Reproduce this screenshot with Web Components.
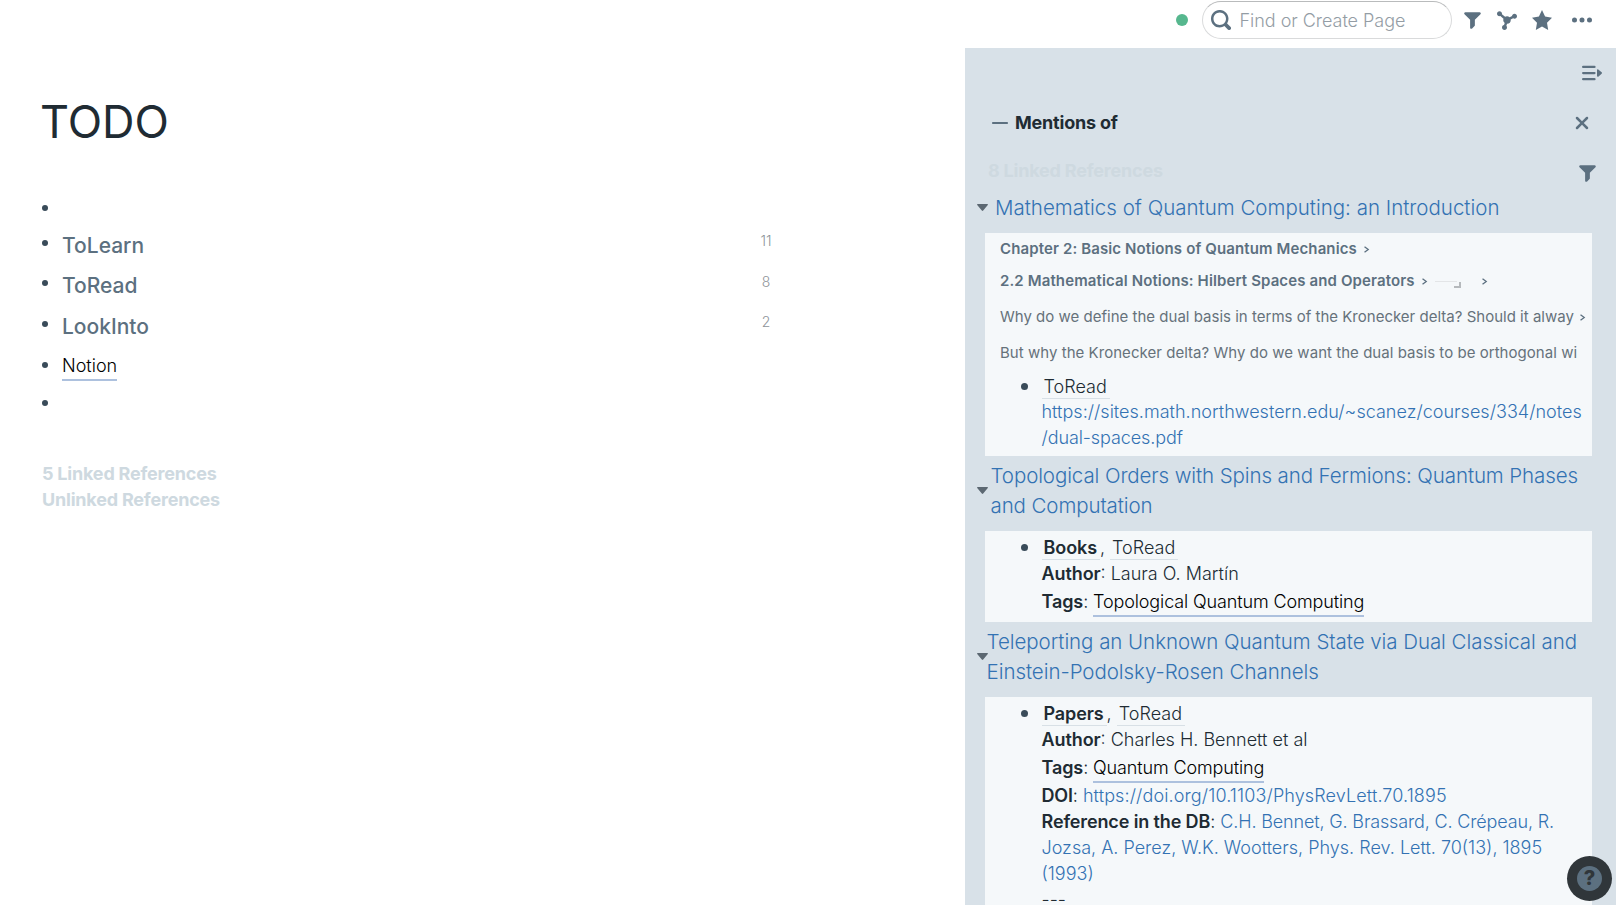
<!DOCTYPE html>
<html lang="en">
<head>
<meta charset="utf-8">
<title>TODO</title>
<style>
html,body{margin:0;height:100%;overflow:hidden;background:#fff}
body{font-family:Inter,"Liberation Sans",sans-serif;font-size:18px;line-height:26px;font-weight:300;color:#202b33}
</style>
</head>
<body>
<roam-app></roam-app>
<script>
const define = (name, html) => customElements.define(name, class extends HTMLElement {
  constructor() {
    super();
    const t = document.createElement('template');
    t.innerHTML = typeof html === 'function' ? html(this) : html;
    this.attachShadow({ mode: 'open' }).appendChild(t.content.cloneNode(true));
  }
});

const ICONS = {
  search: '<path d="M15.55 13.43l-2.67-2.68a6.94 6.94 0 001.11-3.76c0-3.87-3.13-7-7-7s-7 3.13-7 7 3.13 7 7 7c1.39 0 2.68-.42 3.76-1.11l2.68 2.67a1.498 1.498 0 102.12-2.12zm-8.56-1.44c-2.76 0-5-2.24-5-5s2.24-5 5-5 5 2.24 5 5-2.24 5-5 5z"/>',
  filter: '<path d="M13.99.99h-12a1.003 1.003 0 00-.71 1.71l4.71 4.71V14a1.003 1.003 0 001.71.71l2-2c.18-.18.29-.43.29-.71V7.41L14.7 2.7a1.003 1.003 0 00-.71-1.71z"/>',
  graph: '<path d="M14 3c-1.06 0-1.92.83-1.99 1.88l-1.93.97A2.95 2.95 0 008 5c-.56 0-1.08.16-1.52.43L3.97 3.34C3.98 3.23 4 3.12 4 3c0-1.1-.9-2-2-2s-2 .9-2 2 .9 2 2 2c.24 0 .47-.05.68-.13l2.51 2.09C5.08 7.29 5 7.63 5 8c0 .96.46 1.81 1.16 2.35l-.56 1.69c-.91.19-1.6.99-1.6 1.96 0 1.1.9 2 2 2s2-.9 2-2c0-.51-.2-.97-.51-1.32l.56-1.69A2.99 2.99 0 0011 8c0-.12-.02-.24-.04-.36l1.94-.97c.32.2.69.33 1.1.33 1.1 0 2-.9 2-2s-.9-2-2-2z"/>',
  star: '<path d="M16 6.11l-5.53-.84L8 0 5.53 5.27 0 6.11l4 4.1L3.06 16 8 13.27 12.94 16 12 10.21z"/>',
  more: '<path d="M2 6.03a2 2 0 100 4 2 2 0 100-4zM14 6.03a2 2 0 100 4 2 2 0 100-4zM8 6.03a2 2 0 100 4 2 2 0 100-4z"/>',
  cross: '<path d="M9.41 8l3.29-3.29c.19-.18.3-.43.3-.71a1.003 1.003 0 00-1.71-.71L8 6.59l-3.29-3.3a1.003 1.003 0 00-1.42 1.42L6.59 8 3.3 11.29c-.19.18-.3.43-.3.71a1.003 1.003 0 001.71.71L8 9.41l3.29 3.29c.18.19.43.3.71.3a1.003 1.003 0 00.71-1.71L9.41 8z"/>',
  collapse: '<path d="M.9 3.1H10M.9 8H10M.9 12.9H10" stroke="currentColor" stroke-width="1.8" stroke-linecap="round"/><path d="M12 5.6c0-.6.6-.8 1-.5l2.7 2.3c.4.3.4.8 0 1.1L13 10.9c-.4.3-1 .1-1-.5z"/>',
  minus: '<path d="M.8 8h14.4" stroke="currentColor" stroke-width="1.9" stroke-linecap="round"/>',
  chevron: '<path d="M3.5 1.5L12 8l-8.500 6.500" fill="none" stroke="currentColor" stroke-width="3"/>',
  caret: '<path d="M1 3h14c.8 0 1.200.8.7 1.400L9 12.500c-.6.700-1.400.700-2 0L.3 4.400C-.2 3.800.2 3 1 3z"/>'
};
define('ui-icon', el => `<style>:host{display:block;flex:none;color:#5c7080;width:20px;height:20px}svg{display:block;width:100%;height:100%;fill:currentColor}</style>
<svg viewBox="0 0 16 16">${ICONS[el.getAttribute('name')]}</svg>`);

define('top-bar', `<style>
:host{display:flex;height:48px;box-sizing:border-box;padding-left:1176px;align-items:flex-start}
.dot{width:12px;height:12px;border-radius:50%;background:#56b78e;margin:14px 14px 0 0}
.search{box-sizing:border-box;width:250px;height:38px;margin-top:1px;border-radius:19px;border:1px solid #d9dadb;border-top-color:#b9bbbc;display:flex;align-items:center;padding-left:8px;gap:8.500px;color:#949da5;letter-spacing:-.03px}
.search span{padding-top:1px}
.search ui-icon{margin-top:-1px}
ui-icon{margin-top:10px}
</style>
<span class="dot"></span>
<div class="search"><ui-icon name="search"></ui-icon><span>Find or Create Page</span></div>
<ui-icon name="filter" style="width:19px;height:19px;margin-left:10.500px;margin-top:11px"></ui-icon>
<ui-icon name="graph" style="margin-left:15.500px"></ui-icon>
<ui-icon name="star" style="margin-left:15px"></ui-icon>
<ui-icon name="more" style="margin-left:20px"></ui-icon>`);

define('page-ref', `<style>:host{display:inline;color:#000;border-bottom:2px solid #adc1de;padding-bottom:3px}</style><slot></slot>`);
define('page-tag', `<style>:host{display:inline;border-bottom:1px solid #d8e0e6;padding:0 3px 1px 2px}</style><slot></slot>`);
define('ext-link', `<style>:host{display:inline;color:#3372b3}</style><slot></slot>`);

define('outline-row', `<style>
:host{display:flex;align-items:flex-start;height:40.400px}
.bullet{flex:none;width:6px;height:6px;border-radius:50%;background:#394b59;margin:11px 14px 0 42px}
.text{padding-top:2px;width:671px}
:host([heading]) .text{font-size:21px;line-height:30px;font-weight:450;color:#5c7080}
.count{font-size:14px;line-height:24px;width:66px;text-align:center;color:#8e9499}
</style><span class="bullet"></span><div class="text"><slot></slot></div><div class="count"><slot name="count"></slot></div>`);

define('article-view', `<style>
:host{display:block;width:965px}
h1{margin:0;padding:46px 0 44px 40px;font-size:45px;line-height:56px;font-weight:400;color:#202b33}
.refs{padding:33.800px 0 0 42px;font-weight:650;letter-spacing:-.2px;color:#ced9e0}
</style>
<h1>TODO</h1>
<outline-row style="height:35px"></outline-row>
<outline-row heading>ToLearn<span slot="count">11</span></outline-row>
<outline-row heading>ToRead<span slot="count" style="position:relative;top:1px">8</span></outline-row>
<outline-row heading style="height:40.900px">LookInto<span slot="count">2</span></outline-row>
<outline-row style="height:38.500px"><page-ref>Notion</page-ref></outline-row>
<outline-row style="height:38px"></outline-row>
<div class="refs"><div>5 Linked References</div><div>Unlinked References</div></div>`);

define('crumb-line', `<style>
:host{display:flex;align-items:center;height:32px;padding-left:15px;font-size:15px;font-weight:600;letter-spacing:.12px;color:#5c7080;white-space:nowrap}
:host([thin]){height:36px;font-weight:400;letter-spacing:.04px;color:#66727b}
</style><slot></slot>`);

define('ref-group', `<style>
:host{display:block;padding-left:12px}
.title{display:flex;align-items:center;padding:4px 0 11px;font-size:20.500px;line-height:30px;color:#3372b3}
.title ui-icon{width:11px;height:11px;color:#5c6872;margin-top:1px}
.card{margin:0 24px 0 8px;background:#f5f8fa;overflow:hidden}
.block{display:flex;padding:3.500px 0 5.500px}
.bullet{flex:none;width:7px;height:7px;border-radius:50%;background:#394b59;margin:var(--dot-top,9.500px) 13.500px 0 36px}
.body{flex:1;white-space:nowrap}
.name{margin:1px 0 -1px var(--indent,8px);white-space:nowrap}
</style>
<div class="title"><ui-icon name="caret"></ui-icon><div class="name"><slot name="title"></slot></div></div>
<div class="card"><slot name="crumbs"></slot><div class="block"><span class="bullet"></span><div class="body"><slot></slot></div></div></div>`);

define('side-panel', `<style>
:host{display:block;width:651px;height:857px;background:#d8e1e8;overflow:hidden}
b{font-weight:600;letter-spacing:-.1px}
.tools{display:flex;justify-content:flex-end;padding:14.500px 14px 0 0;height:46.500px;box-sizing:border-box}
.head{display:flex;align-items:center;height:56px;padding:0 24px 0 27px;font-weight:650;letter-spacing:-.2px}
.head ui-icon:first-child{width:16px;height:16px;margin-right:7px}
.head span{flex:1}
.sub{display:flex;justify-content:space-between;height:37.500px;padding:7px 19px 0 23px;box-sizing:border-box;font-weight:650;letter-spacing:-.2px;color:#ced9e0}
.tags{line-height:30px;letter-spacing:-.13px}
.stub{display:block;position:relative;width:27px;height:14px;margin:0 19px 0 7px}
.stub i{position:absolute;left:0;top:7px;width:22px;height:1px;background:#e3e5e7}
.stub u{position:absolute;left:19px;top:8px;width:5px;height:4px;border:solid #b5b9bc;border-width:0 2px 2px 0}
crumb-line ui-icon{width:7px;height:7px}
</style>
<div class="tools"><ui-icon name="collapse"></ui-icon></div>
<div class="head"><ui-icon name="minus"></ui-icon><span>Mentions of</span><ui-icon name="cross"></ui-icon></div>
<div class="sub"><span>8 Linked References</span><ui-icon name="filter" style="width:19px;height:19px;margin-top:6px"></ui-icon></div>
<ref-group style="--indent:7px;--dot-top:8px">
  <div slot="title">Mathematics of Quantum Computing: an Introduction</div>
  <crumb-line slot="crumbs"><span>Chapter 2: Basic Notions of Quantum Mechanics</span><ui-icon name="chevron" style="margin-left:6.500px"></ui-icon></crumb-line>
  <crumb-line slot="crumbs"><span>2.2 Mathematical Notions: Hilbert Spaces and Operators</span><ui-icon name="chevron" style="margin-left:6.500px"></ui-icon><span class="stub"><i></i><u></u></span><ui-icon name="chevron"></ui-icon></crumb-line>
  <crumb-line slot="crumbs" thin style="margin-top:2px;letter-spacing:.01px"><span>Why do we define the dual basis in terms of the Kronecker delta? Should it alway</span><ui-icon name="chevron" style="margin-left:5.500px"></ui-icon></crumb-line>
  <crumb-line slot="crumbs" thin><span>But why the Kronecker delta? Why do we want the dual basis to be orthogonal wi</span></crumb-line>
  <div style="margin:-1px 0 -1px"><page-tag>ToRead</page-tag></div>
  <div><ext-link><span style="letter-spacing:.02px">https://sites.math.northwestern.edu/~scanez/courses/334/notes</span><br><span style="letter-spacing:-.1px">/dual-spaces.pdf</span></ext-link></div>
</ref-group>
<ref-group style="--indent:2.500px">
  <div slot="title" style="letter-spacing:-.1px">Topological Orders with Spins and Fermions: Quantum Phases<br>and Computation</div>
  <div><page-tag><b>Books</b></page-tag>, <page-tag>ToRead</page-tag></div>
  <div><b>Author</b>: Laura O. Martín</div>
  <div class="tags"><b>Tags</b>: <page-ref>Topological Quantum Computing</page-ref></div>
</ref-group>
<ref-group style="--indent:-1.500px">
  <div slot="title" style="letter-spacing:-.05px">Teleporting an Unknown Quantum State via Dual Classical and<br>Einstein-Podolsky-Rosen Channels</div>
  <div><page-tag><b>Papers</b></page-tag>, <page-tag>ToRead</page-tag></div>
  <div><b>Author</b>: Charles H. Bennett et al</div>
  <div class="tags"><b>Tags</b>: <page-ref>Quantum Computing</page-ref></div>
  <div><b style="letter-spacing:-.2px">DOI</b>: <ext-link style="letter-spacing:.12px">https://doi.org/10.1103/PhysRevLett.70.1895</ext-link></div>
  <div><b style="letter-spacing:-.13px">Reference in the DB</b>: <ext-link><span style="letter-spacing:-.15px">C.H. Bennet, G. Brassard, C. Crépeau, R.</span><br>Jozsa, A. Perez, W.K. Wootters, Phys. Rev. Lett. 70(13), 1895<br>(1993)</ext-link></div>
  <div>---</div>
</ref-group>`);

define('help-button', `<style>
:host{position:absolute;right:4px;bottom:4px;width:45px;height:45px;border-radius:50%;background:#30363a;display:flex;align-items:center;justify-content:center}
span{width:25px;height:25px;border-radius:50%;background:#5c7080;color:#30363a;font-size:20px;line-height:25px;font-weight:800;text-align:center}
</style><span>?</span>`);

define('roam-app', `<style>
:host{display:block;position:relative;width:1616px;height:905px;overflow:hidden}
main{display:flex}
</style><top-bar></top-bar><main><article-view></article-view><side-panel></side-panel></main><help-button></help-button>`);
</script>
</body>
</html>
